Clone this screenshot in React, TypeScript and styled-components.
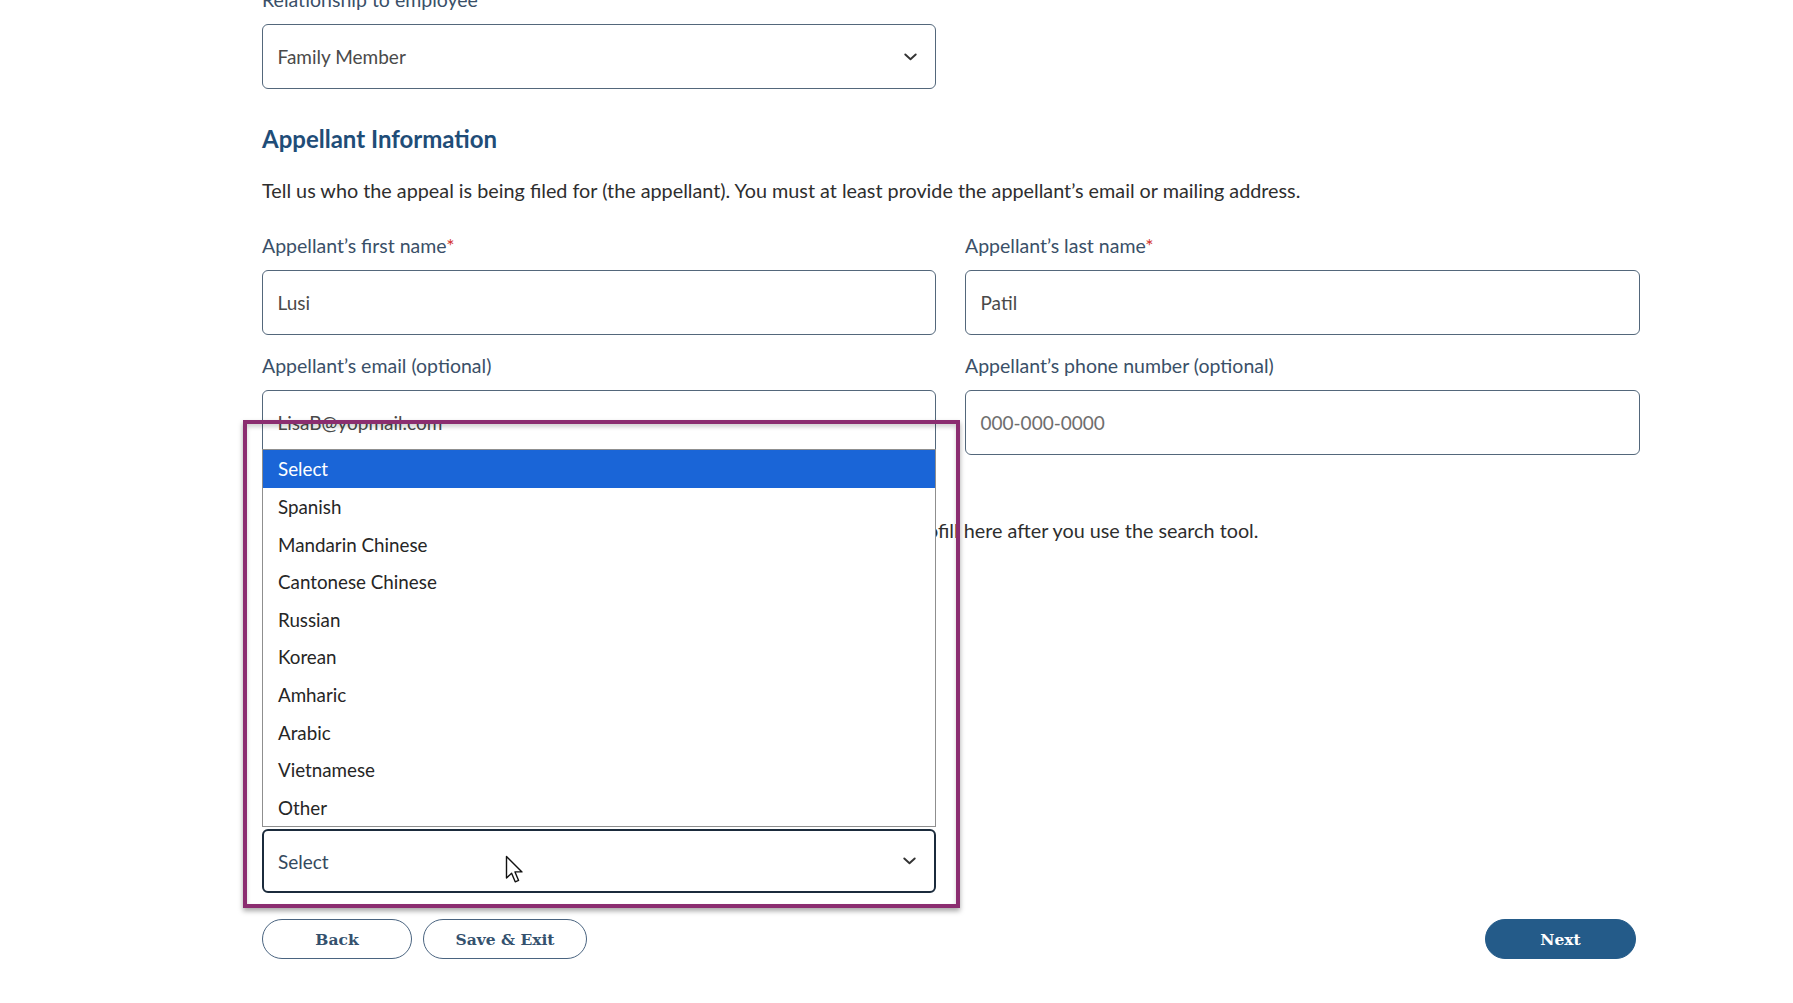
import React from "react";
import styled, { createGlobalStyle } from "styled-components";

const GlobalStyle = createGlobalStyle`
  html, body { margin: 0; padding: 0; background: #ffffff; }
  body {
    font-family: Lato, "Liberation Sans", Arial, sans-serif;
    color: #2b2b2b;
    overflow: hidden;
  }
  * { box-sizing: border-box; }
`;

const Page = styled.main`
  width: 1378px;
  margin-left: 262px;
  display: flex;
  flex-direction: column;
`;

const Field = styled.div<{ $mt?: number; $w?: number }>`
  display: flex;
  flex-direction: column;
  margin-top: ${(p) => p.$mt ?? 0}px;
  width: ${(p) => (p.$w ? `${p.$w}px` : "auto")};
`;

const Label = styled.label`
  font-size: 19.5px;
  line-height: 24px;
  color: #3a5068;
  margin-bottom: 12px;
`;

const Req = styled.span`
  color: #d2312c;
`;

const Box = styled.div<{ $focused?: boolean }>`
  height: ${(p) => (p.$focused ? 64 : 65)}px;
  border: ${(p) => (p.$focused ? "2px solid #1b2b3c" : "1.5px solid #53677b")};
  border-radius: 6px;
  background: #ffffff;
  display: flex;
  align-items: center;
  justify-content: space-between;
  padding: 0 18px 0 ${(p) => (p.$focused ? 14 : 14.5)}px;
  font-size: 19px;
  color: ${(p) => (p.$focused ? "#34495e" : "#4a4a4a")};
`;

const Placeholder = styled.span`
  color: #6e6e6e;
`;

const Heading = styled.h2`
  margin: 35px 0 0;
  font-size: 24px;
  line-height: 30px;
  font-weight: 700;
  color: #1f4d78;
`;

const Text = styled.p<{ $mt: number }>`
  margin: ${(p) => p.$mt}px 0 0;
  font-size: 19.8px;
  line-height: 28px;
  color: #2e2e2e;
  white-space: nowrap;
`;

const Grid = styled.div`
  margin-top: 30px;
  display: grid;
  grid-template-columns: 674px 675px;
  column-gap: 29px;
  row-gap: 19px;
`;

const SelectWrap = styled.div`
  position: relative;
`;

const Chevron = () => (
  <svg width="13" height="8" viewBox="0 0 13 8" aria-hidden="true">
    <path d="M1.3 1.5 L6.5 6.3 L11.7 1.5" fill="none" stroke="#333" strokeWidth="1.9" strokeLinecap="round" strokeLinejoin="round" />
  </svg>
);

const OptionList = styled.ul`
  position: absolute;
  left: 0;
  right: 0;
  bottom: calc(100% + 2px);
  margin: 0;
  padding: 0;
  list-style: none;
  background: #ffffff;
  border: 1px solid #8f8f8f;
  z-index: 2;
`;

const Option = styled.li<{ $active?: boolean }>`
  height: 37.6px;
  display: flex;
  align-items: center;
  padding-left: 15px;
  font-size: 18.8px;
  color: ${(p) => (p.$active ? "#ffffff" : "#262626")};
  background: ${(p) => (p.$active ? "#1a65d7" : "transparent")};
`;

const Annotation = styled.div`
  position: absolute;
  left: -19px;
  top: -409px;
  width: 717px;
  height: 488px;
  border: 4px solid #8b2d70;
  box-shadow: 0 3px 5px rgba(0, 0, 0, 0.35), inset 0 3px 4px rgba(0, 0, 0, 0.18);
  pointer-events: none;
  z-index: 3;
`;

const Pointer = styled.svg`
  position: absolute;
  left: 243px;
  top: 26px;
  z-index: 4;
`;

const Actions = styled.div`
  margin-top: 26px;
  display: flex;
  align-items: center;
  justify-content: space-between;
  padding-right: 4px;
`;

const ButtonGroup = styled.div`
  display: flex;
  gap: 11px;
`;

const Button = styled.button<{ $primary?: boolean; $w: number }>`
  width: ${(p) => p.$w}px;
  height: 40px;
  border-radius: 20px;
  border: 1.5px solid ${(p) => (p.$primary ? "#245b89" : "#4a6480")};
  background: ${(p) => (p.$primary ? "#245b89" : "#ffffff")};
  color: ${(p) => (p.$primary ? "#ffffff" : "#34516e")};
  font-family: "DejaVu Serif", "Liberation Serif", serif;
  font-weight: 700;
  font-size: 15.5px;
  padding: 0;
  cursor: pointer;
`;

const languages = [
  "Select",
  "Spanish",
  "Mandarin Chinese",
  "Cantonese Chinese",
  "Russian",
  "Korean",
  "Amharic",
  "Arabic",
  "Vietnamese",
  "Other",
];

export default function App() {
  return (
    <>
      <GlobalStyle />
      <Page>
        <Field $mt={-12} $w={674}>
          <Label>
            Relationship to employee<Req>*</Req>
          </Label>
          <Box>
            <span>Family Member</span>
            <Chevron />
          </Box>
        </Field>

        <Heading>Appellant Information</Heading>
        <Text $mt={22}>
          Tell us who the appeal is being filed for (the appellant). You must at least provide the appellant’s email or mailing address.
        </Text>

        <Grid>
          <Field>
            <Label>
              Appellant’s first name<Req>*</Req>
            </Label>
            <Box>Lusi</Box>
          </Field>
          <Field>
            <Label>
              Appellant’s last name<Req>*</Req>
            </Label>
            <Box>Patil</Box>
          </Field>
          <Field>
            <Label>Appellant’s email (optional)</Label>
            <Box>LisaB@yopmail.com</Box>
          </Field>
          <Field>
            <Label>Appellant’s phone number (optional)</Label>
            <Box>
              <Placeholder>000-000-0000</Placeholder>
            </Box>
          </Field>
        </Grid>

        <Text $mt={61}>
          Search for the appellant’s mailing addresses below. The address fields will autofill here after you use the search tool.
        </Text>

        <Field $mt={285} $w={674}>
          <SelectWrap>
            <Box $focused role="combobox" aria-label="Appellant’s preferred language" aria-expanded="true">
              <span>Select</span>
              <Chevron />
            </Box>
            <OptionList role="listbox">
              {languages.map((l, i) => (
                <Option key={l} $active={i === 0} role="option" aria-selected={i === 0}>
                  {l}
                </Option>
              ))}
            </OptionList>
            <Annotation />
            <Pointer width="19" height="29" viewBox="0 0 19 29" aria-hidden="true">
              <path
                d="M1.5 1.5 V23 L6.6 18.2 L10.2 26.8 L13.6 25.4 L10 16.9 H17 Z"
                fill="#ffffff"
                stroke="#111"
                strokeWidth="1.4"
                strokeLinejoin="round"
              />
            </Pointer>
          </SelectWrap>
        </Field>

        <Actions>
          <ButtonGroup>
            <Button $w={150}>Back</Button>
            <Button $w={164}>Save &amp; Exit</Button>
          </ButtonGroup>
          <Button $primary $w={151}>
            Next
          </Button>
        </Actions>
      </Page>
    </>
  );
}
